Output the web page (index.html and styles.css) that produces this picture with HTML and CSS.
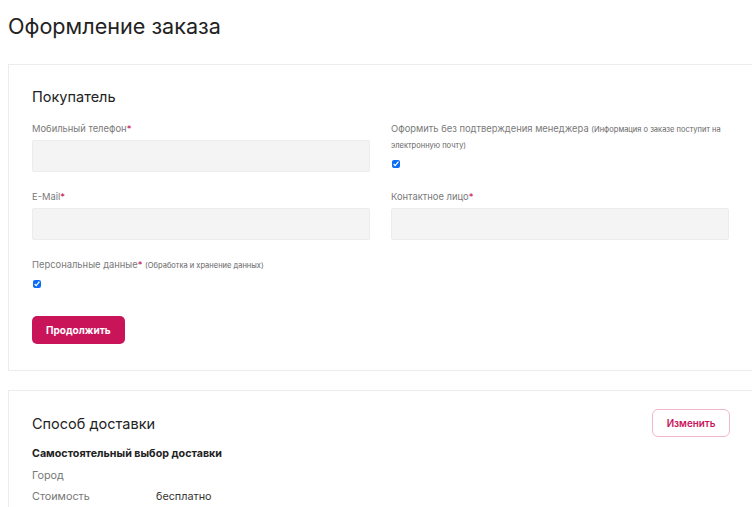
FILE: index.html
```html
<!DOCTYPE html>
<html lang="ru">
<head>
<meta charset="utf-8">
<title>Оформление заказа</title>
<link rel="stylesheet" href="styles.css">
</head>
<body>
<h1 class="page-title">Оформление заказа</h1>

<section class="card">
  <h2 class="card-title">Покупатель</h2>
  <div class="grid">
    <div class="field">
      <label class="label">Мобильный телефон<span class="req">*</span></label>
      <div class="input"></div>
    </div>
    <div class="field">
      <label class="label">Оформить без подтверждения менеджера <span class="note">(Информация о заказе поступит на электронную почту)</span></label>
      <input type="checkbox" class="check" checked>
    </div>
    <div class="field">
      <label class="label">E-Mail<span class="req">*</span></label>
      <div class="input"></div>
    </div>
    <div class="field">
      <label class="label">Контактное лицо<span class="req">*</span></label>
      <div class="input"></div>
    </div>
    <div class="field">
      <label class="label">Персональные данные<span class="req">*</span> <span class="note">(Обработка и хранение данных)</span></label>
      <input type="checkbox" class="check" checked>
    </div>
  </div>
  <button class="btn-primary">Продолжить</button>
</section>

<section class="card card-delivery">
  <div class="card-head">
    <h2 class="card-title">Способ доставки</h2>
    <button class="btn-outline">Изменить</button>
  </div>
  <div class="delivery-name">Самостоятельный выбор доставки</div>
  <div class="row"><span class="row-key">Город</span><span class="row-val"></span></div>
  <div class="row"><span class="row-key">Стоимость</span><span class="row-val">бесплатно</span></div>
</section>
</body>
</html>
```
FILE: styles.css
```css
html, body {
  margin: 0;
  padding: 0;
  background: #fff;
  overflow: hidden;
}
body {
  font-family: Inter, "Noto Sans", sans-serif;
  color: #222;
  padding: 0 0 0 8px;
  width: 760px;
}
.page-title {
  margin: 0;
  padding-top: 11px;
  height: 64px;
  box-sizing: border-box;
  font-size: 21.6px;
  font-weight: 400;
  line-height: 30px;
  color: #222;
}
.card {
  width: 745px;
  box-sizing: border-box;
  border: 1px solid #ececec;
  border-right: none;
  padding: 21px 23px 26px 23px;
  margin: 0 0 19px 0;
  background: #fff;
}
.card-title {
  margin: 0;
  font-size: 14.5px;
  font-weight: 400;
  line-height: 22px;
  color: #222;
}
.grid {
  margin-top: 13px;
  display: grid;
  grid-template-columns: 338px 338px;
  column-gap: 21px;
  row-gap: 17px;
}
.field {
  display: flex;
  flex-direction: column;
  align-items: flex-start;
}
.label {
  font-size: 9.4px;
  line-height: 15px;
  color: #7a7a7a;
  margin-bottom: 4px;
}
.req { color: #c8155a; }
.note { font-size: 7.5px; color: #666; }
.input {
  width: 100%;
  height: 32px;
  box-sizing: border-box;
  background: #f4f4f4;
  border: 1px solid #ececec;
  border-radius: 2px;
}
.check {
  margin: 3px 0 0 1px;
  width: 8px;
  height: 8px;
  accent-color: #0b6cf5;
}
.btn-primary {
  margin-top: 28px;
  display: block;
  height: 28px;
  padding: 0 14px;
  border: none;
  border-radius: 5px;
  background: #c9145a;
  color: #fff;
  font-family: Inter, sans-serif;
  font-size: 10px;
  font-weight: 700;
}
.card-delivery {
  padding-top: 18px;
  padding-bottom: 0;
  height: 140px;
}
.card-head {
  display: flex;
  justify-content: space-between;
  align-items: center;
}
.card-delivery .card-title {
  font-size: 14.5px;
  margin-top: 2px;
}
.btn-outline {
  height: 28px;
  width: 78px;
  border: 1px solid #f2b7cc;
  border-radius: 6px;
  background: #fff;
  color: #c9145a;
  font-family: Inter, sans-serif;
  font-size: 9.8px;
  font-weight: 600;
}
.delivery-name {
  margin-top: 6px;
  font-size: 10.7px;
  font-weight: 700;
  color: #222;
  line-height: 22px;
}
.row {
  display: flex;
  font-size: 10.8px;
  line-height: 21px;
}
.row-key { width: 124px; color: #777; }
.row-val { color: #333; }
```
